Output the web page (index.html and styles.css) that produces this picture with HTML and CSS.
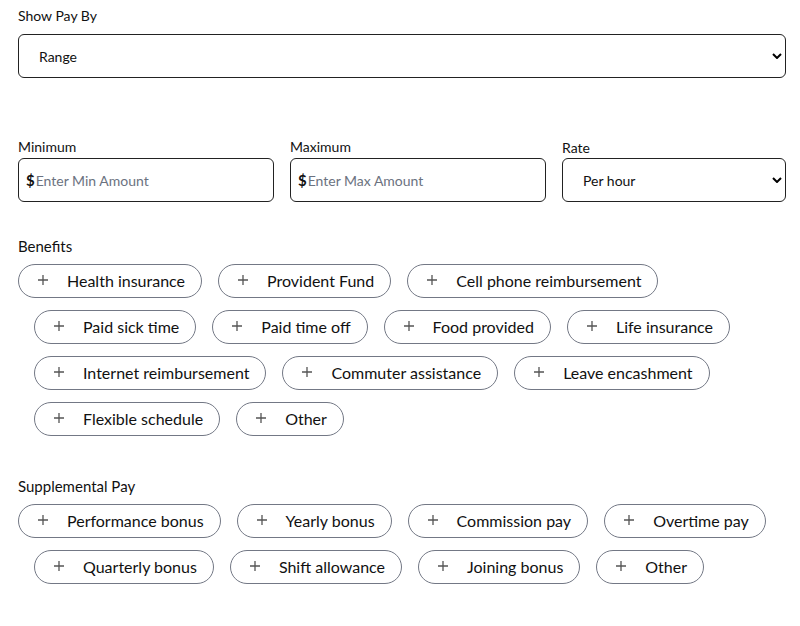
FILE: index.html
```html
<!DOCTYPE html>
<html lang="en">

<head>
    <meta charset="UTF-8">
    <meta name="viewport" content="width=device-width, initial-scale=1.0">
    <title>Pay and benefits</title>
    <link rel="stylesheet" href="styles.css">
</head>

<body>

    <div id="pay-form">
        <div class="field">
            <label for="show-pay-by" class="field-label">Show Pay By</label>
            <div class="select-wrap">
                <select id="show-pay-by" class="select">
                    <option value="range">Range</option>
                    <option value="starting">Starting amount</option>
                    <option value="maximum">Maximum amount</option>
                    <option value="exact">Exact amount</option>
                </select>
                <svg class="chevron" width="10" height="6" viewBox="0 0 10 6"><path d="M1 1l4 4 4-4" fill="none" stroke="#000" stroke-width="2"/></svg>
            </div>
        </div>

        <div class="pay-row">
            <div class="field">
                <label for="min-amount" class="field-label small">Minimum</label>
                <div class="money-input">
                    <span class="currency">$</span>
                    <input type="text" id="min-amount" placeholder="Enter Min Amount">
                </div>
            </div>
            <div class="field">
                <label for="max-amount" class="field-label small">Maximum</label>
                <div class="money-input">
                    <span class="currency">$</span>
                    <input type="text" id="max-amount" placeholder="Enter Max Amount">
                </div>
            </div>
            <div class="field">
                <label for="rate" class="field-label small rate-label">Rate</label>
                <div class="select-wrap">
                    <select id="rate" class="select">
                        <option value="hour">Per hour</option>
                        <option value="day">Per day</option>
                        <option value="week">Per week</option>
                        <option value="month">Per month</option>
                        <option value="year">Per year</option>
                    </select>
                    <svg class="chevron" width="10" height="6" viewBox="0 0 10 6"><path d="M1 1l4 4 4-4" fill="none" stroke="#000" stroke-width="2"/></svg>
                </div>
            </div>
        </div>

        <div class="chip-group benefits">
            <div class="group-title">Benefits</div>
            <div class="chips" id="benefit-chips"></div>
        </div>

        <div class="chip-group supplemental">
            <div class="group-title">Supplemental Pay</div>
            <div class="chips" id="supplemental-chips"></div>
        </div>
    </div>

    <script>
        const benefits = ['Health insurance', 'Provident Fund', 'Cell phone reimbursement', 'Paid sick time',
            'Paid time off', 'Food provided', 'Life insurance', 'Internet reimbursement',
            'Commuter assistance', 'Leave encashment', 'Flexible schedule', 'Other'];

        const supplementalPay = ['Performance bonus', 'Yearly bonus', 'Commission pay', 'Overtime pay',
            'Quarterly bonus', 'Shift allowance', 'Joining bonus', 'Other'];

        // tạo các chip với dấu cộng ở đầu
        function renderChips(containerId, items) {
            const container = document.getElementById(containerId);
            items.forEach(function (text) {
                const chip = document.createElement('button');
                chip.type = 'button';
                chip.className = 'chip';
                chip.innerHTML = '<svg class="plus" width="10" height="10" viewBox="0 0 10 10">' +
                    '<path d="M5 0v10M0 5h10" stroke="#555" stroke-width="1.3"/></svg>';
                const label = document.createElement('span');
                label.textContent = text;
                chip.appendChild(label);
                chip.onclick = function () {
                    chip.classList.toggle('selected');
                }
                container.appendChild(chip);
            });
        }

        renderChips('benefit-chips', benefits);
        renderChips('supplemental-chips', supplementalPay);
    </script>

</body>

</html>
```

FILE: styles.css
```css
body {
    font-family: 'Lato', sans-serif;
    margin: 0;
    padding: 6px 14px 20px 18px;
    color: #111;
}

.field-label {
    display: block;
    font-size: 14px;
    line-height: 20px;
    margin-bottom: 8px;
}

.field-label.small {
    font-size: 14px;
    line-height: 18px;
    margin-bottom: 2px;
}

.rate-label {
    position: relative;
    top: 1px;
}

.select-wrap {
    position: relative;
}

.select {
    width: 100%;
    height: 44px;
    padding: 0 30px 0 20px;
    border: 1px solid #222;
    border-radius: 6px;
    background: white;
    font-family: inherit;
    font-size: 14px;
    color: #111;
    appearance: none;
    -webkit-appearance: none;
    box-sizing: border-box;
}

.chevron {
    position: absolute;
    right: 4px;
    top: 19px;
    pointer-events: none;
}

.pay-row {
    display: grid;
    grid-template-columns: 256px 256px 1fr;
    gap: 16px;
    margin-top: 60px;
}

.money-input {
    display: flex;
    align-items: center;
    height: 44px;
    padding: 0 8px 0 7px;
    border: 1px solid #222;
    border-radius: 6px;
    box-sizing: border-box;
}

.currency {
    font-weight: bold;
    font-size: 15px;
}

.money-input input {
    flex: 1;
    min-width: 0;
    border: none;
    outline: none;
    padding: 0 0 0 1px;
    font-family: inherit;
    font-size: 14px;
    color: #111;
}

.money-input input::placeholder {
    color: #6b7280;
}

.chip-group {
    margin-top: 34px;
}

.chip-group.supplemental {
    margin-top: 40px;
}

.group-title {
    font-size: 15px;
    line-height: 20px;
    margin-bottom: 8px;
}

.chips {
    display: flex;
    flex-wrap: wrap;
    row-gap: 12px;
}

.chip {
    display: inline-flex;
    align-items: center;
    gap: 19px;
    height: 34px;
    margin-left: 16px;
    padding: 0 16px 2px 19px;
    border: 1px solid #737885;
    border-radius: 999px;
    background-color: white;
    font-family: inherit;
    font-size: 16px;
    color: #111;
    cursor: pointer;
}

.chip:first-child {
    margin-left: 0;
}

.chip:hover {
    background-color: #f3f4f6;
}

.chip.selected {
    background-color: #e8f0fe;
}
```
